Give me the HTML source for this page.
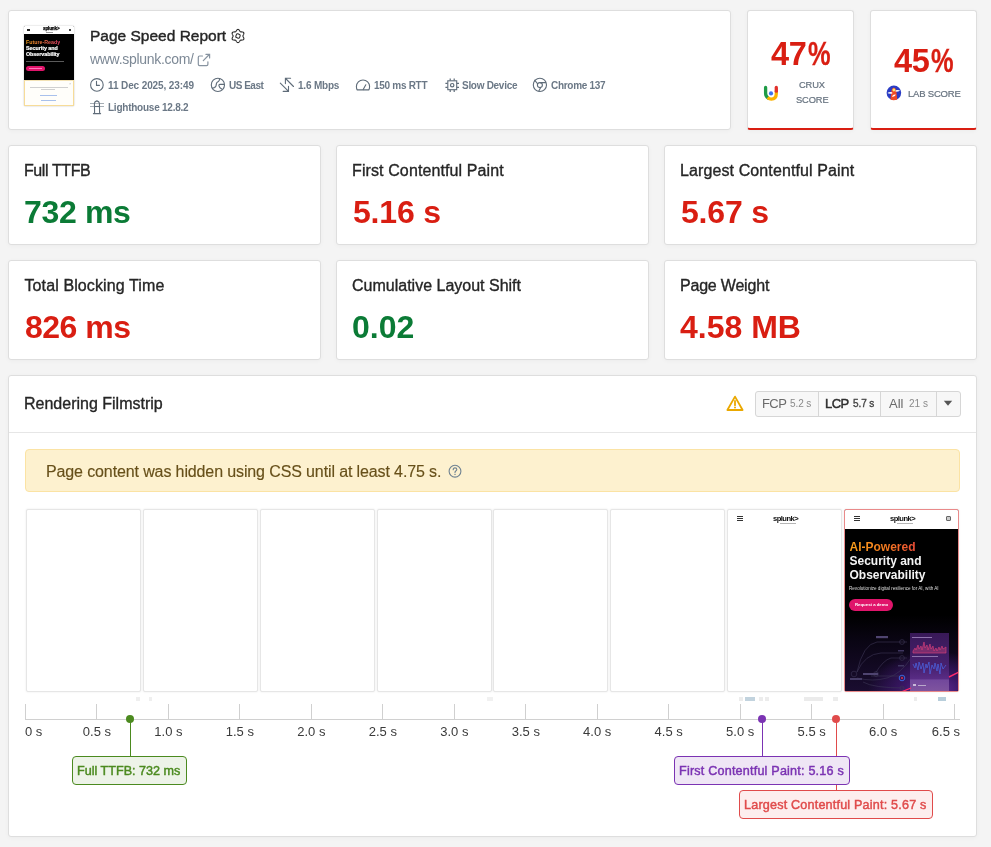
<!DOCTYPE html>
<html><head><meta charset="utf-8">
<style>
*{box-sizing:border-box;margin:0;padding:0}
html,body{width:991px;height:847px;overflow:hidden;background:#f4f4f4;font-family:"Liberation Sans",sans-serif;}
body{position:relative;will-change:transform}
.card{position:absolute;background:#fff;border:1px solid #dedede;border-radius:3px;box-shadow:0 1px 4px rgba(0,0,0,.035)}
.t{position:absolute;white-space:nowrap;line-height:1}
svg{position:absolute;overflow:visible}
.meta{font-size:10px;font-weight:bold;color:#6b7886}
.mt{font-size:16px;color:#262626;-webkit-text-stroke:.35px #262626}
.mv{font-size:32px;font-weight:bold}
.red{color:#d91e12}
.green{color:#0b7b36}
.frame{position:absolute;top:509px;width:115px;height:183px;background:#fff;border:1px solid #e6e6e6;border-radius:2px;box-shadow:0 0 2px rgba(0,0,0,.1)}
.tick{position:absolute;top:704px;width:1px;height:15px;background:#d0d0d0}
.al{position:absolute;top:725px;font-size:13px;color:#3a3a3a;line-height:1;white-space:nowrap}
</style></head><body>

<!-- Header card -->
<div class="card" style="left:8px;top:10px;width:723px;height:120px"></div>
<div class="card" style="left:747px;top:10px;width:107px;height:120px;border-bottom:2px solid #d91e12"></div>
<div class="card" style="left:870px;top:10px;width:107px;height:120px;border-bottom:2px solid #d91e12"></div>
<!-- thumbnail -->
<div id="thumb" style="position:absolute;left:24px;top:26px;width:50px;height:80px;background:#000;box-shadow:0 0 1.5px rgba(0,0,0,.35);overflow:hidden;border-radius:1px">
  <div style="position:absolute;left:0;top:0;width:50px;height:8px;background:#fff"></div>
  <div style="position:absolute;left:3px;top:3px;width:2.5px;height:2px;background:#222"></div>
  <div class="t" style="left:19px;top:1.2px;font-size:4.6px;font-weight:bold;color:#000;-webkit-text-stroke:.25px #000;letter-spacing:-.15px">splunk&gt;</div><div style="position:absolute;left:22px;top:6px;width:7px;height:.6px;background:#999"></div>
  <div style="position:absolute;left:45px;top:3px;width:2px;height:2px;background:#444"></div>
  <div class="t" style="left:2px;top:13.5px;font-size:5.3px;font-weight:bold;background:linear-gradient(90deg,#f7a21b,#ee3f6b);-webkit-background-clip:text;color:transparent">Future-Ready</div>
  <div class="t" style="left:2px;top:19.8px;font-size:5.3px;font-weight:bold;color:#fff;-webkit-text-stroke:.2px #fff">Security and</div>
  <div class="t" style="left:2px;top:26px;font-size:5.3px;font-weight:bold;color:#fff;-webkit-text-stroke:.2px #fff">Observability</div>
  <div style="position:absolute;left:2px;top:34.5px;width:38px;height:.8px;background:#5a5a5a"></div>
  <div style="position:absolute;left:2px;top:39.5px;width:19px;height:5px;border-radius:3px;background:#e0156b"></div>
  <div style="position:absolute;left:5px;top:41.5px;width:13px;height:1px;background:#f7b"></div>
  <div style="position:absolute;left:0;top:54px;width:50px;height:26px;background:#fffefa;border:1px solid #f7dc98;border-top:1px solid #f3e2b5"></div>
  <div style="position:absolute;left:6px;top:60.5px;width:38px;height:1px;background:#d0d0d0"></div>
  <div style="position:absolute;left:17px;top:63px;width:14px;height:1px;background:#d0d0d0"></div>
  <div style="position:absolute;left:16px;top:69px;width:17px;height:1px;background:#a9c1ec"></div>
  <div class="t" style="left:45px;top:56px;font-size:4px;color:#bbb">&#215;</div>
  <div style="position:absolute;left:17px;top:74px;width:15px;height:1px;background:#a9c1ec"></div>
</div>

<div class="t" style="left:90px;top:28px;font-size:15.5px;color:#262626;-webkit-text-stroke:.4px #262626">Page Speed Report</div>
<div class="t" style="left:90px;top:52px;font-size:14px;color:#7d8996;letter-spacing:-.3px">www.splunk.com/</div>

<div class="t meta" style="left:108px;top:81px;letter-spacing:-.11px">11 Dec 2025, 23:49</div>
<div class="t meta" style="left:229px;top:81px;letter-spacing:-.5px">US East</div>
<div class="t meta" style="left:298px;top:81px;letter-spacing:-.2px">1.6 Mbps</div>
<div class="t meta" style="left:374px;top:81px;letter-spacing:-.29px">150 ms RTT</div>
<div class="t meta" style="left:462px;top:81px;letter-spacing:-.29px">Slow Device</div>
<div class="t meta" style="left:551px;top:81px;letter-spacing:-.3px">Chrome 137</div>
<div class="t meta" style="left:108px;top:102.5px;letter-spacing:-.24px">Lighthouse 12.8.2</div>


<!-- header icons -->
<svg style="left:231px;top:29px" width="14" height="14" viewBox="0 0 14 14"><path d="M11.90 7.00 L11.93 6.74 L12.03 6.47 L12.19 6.18 L12.37 5.86 L12.55 5.51 L12.72 5.14 L12.83 4.76 L12.88 4.38 L12.84 4.02 L12.72 3.70 L12.50 3.43 L12.21 3.22 L11.86 3.07 L11.47 2.98 L11.07 2.93 L10.67 2.92 L10.30 2.92 L9.98 2.90 L9.69 2.86 L9.45 2.76 L9.24 2.60 L9.06 2.38 L8.88 2.10 L8.70 1.78 L8.49 1.45 L8.25 1.12 L7.98 0.83 L7.67 0.60 L7.34 0.45 L7.00 0.40 L6.66 0.45 L6.33 0.60 L6.02 0.83 L5.75 1.12 L5.51 1.45 L5.30 1.78 L5.12 2.10 L4.94 2.38 L4.76 2.60 L4.55 2.76 L4.31 2.86 L4.02 2.90 L3.70 2.92 L3.33 2.92 L2.93 2.93 L2.53 2.98 L2.14 3.07 L1.79 3.22 L1.50 3.43 L1.28 3.70 L1.16 4.02 L1.12 4.38 L1.17 4.76 L1.28 5.14 L1.45 5.51 L1.63 5.86 L1.81 6.18 L1.97 6.47 L2.07 6.74 L2.10 7.00 L2.07 7.26 L1.97 7.53 L1.81 7.82 L1.63 8.14 L1.45 8.49 L1.28 8.86 L1.17 9.24 L1.12 9.62 L1.16 9.98 L1.28 10.30 L1.50 10.57 L1.79 10.78 L2.14 10.93 L2.53 11.02 L2.93 11.07 L3.33 11.08 L3.70 11.08 L4.02 11.10 L4.31 11.14 L4.55 11.24 L4.76 11.40 L4.94 11.62 L5.12 11.90 L5.30 12.22 L5.51 12.55 L5.75 12.88 L6.02 13.17 L6.33 13.40 L6.66 13.55 L7.00 13.60 L7.34 13.55 L7.67 13.40 L7.98 13.17 L8.25 12.88 L8.49 12.55 L8.70 12.22 L8.88 11.90 L9.06 11.62 L9.24 11.40 L9.45 11.24 L9.69 11.14 L9.98 11.10 L10.30 11.08 L10.67 11.08 L11.07 11.07 L11.47 11.02 L11.86 10.93 L12.21 10.78 L12.50 10.57 L12.72 10.30 L12.84 9.98 L12.88 9.62 L12.83 9.24 L12.72 8.86 L12.55 8.49 L12.37 8.14 L12.19 7.82 L12.03 7.53 L11.93 7.26Z" fill="none" stroke="#2d2d2d" stroke-width="1.1" stroke-linejoin="round"/><rect x="5" y="5" width="4" height="4" rx="1.2" transform="rotate(20 7 7)" fill="none" stroke="#2d2d2d" stroke-width="1.1"/></svg>
<svg style="left:197px;top:53px" width="14" height="14" viewBox="0 0 14 14"><path d="M5.5 3 H2.6 Q1.3 3 1.3 4.3 V11.3 Q1.3 12.6 2.6 12.6 H9.6 Q10.9 12.6 10.9 11.3 V8.8" fill="none" stroke="#8793a0" stroke-width="1.2" stroke-linecap="round"/><path d="M6.3 7.6 L12.3 1.5 M8.9 1.3 H12.6 V5" fill="none" stroke="#8793a0" stroke-width="1.2" stroke-linecap="round"/></svg>

<svg style="left:89px;top:78px" width="16" height="15" viewBox="0 0 16 15"><circle cx="7.9" cy="6.9" r="6.3" fill="none" stroke="#5f6c79" stroke-width="1.1"/><path d="M7.5 3.3 V7.4 H10.4" fill="none" stroke="#5f6c79" stroke-width="1.1" stroke-linecap="round" stroke-linejoin="round"/></svg>
<svg style="left:210px;top:77px" width="16" height="16" viewBox="0 0 16 16"><circle cx="7.9" cy="7.9" r="6.6" fill="none" stroke="#5f6c79" stroke-width="1.1"/><path d="M9.6 1.6 Q9.6 3.6 8.4 4.6 Q6.6 5.2 6.4 6.6 Q6.4 9.8 4.4 10.6 L2.2 11.2" fill="none" stroke="#5f6c79" stroke-width="1.1" stroke-linejoin="round"/><path d="M14.4 7.4 H9.8 Q8.9 7.4 8.9 8.6 Q9.2 10.6 12 12.3" fill="none" stroke="#5f6c79" stroke-width="1.1" stroke-linejoin="round"/></svg>
<svg style="left:279px;top:77px" width="16" height="16" viewBox="0 0 16 16"><path d="M6.4 6.6 V1.3 H11.6 M6.6 1.5 L14.5 9.5" fill="none" stroke="#5f6c79" stroke-width="1.1" stroke-linecap="round" stroke-linejoin="miter"/><path d="M4.2 14.4 H9.5 V9.2 M9.3 14.2 L1.3 6.2" fill="none" stroke="#5f6c79" stroke-width="1.1" stroke-linecap="round" stroke-linejoin="miter"/></svg>
<svg style="left:355px;top:78px" width="16" height="14" viewBox="0 0 16 14"><path d="M2.2 11.9 Q1.4 10.7 1.4 8.6 A6.6 6.6 0 0 1 14.6 8.6 Q14.6 10.7 13.8 11.9 Z" fill="none" stroke="#5f6c79" stroke-width="1.1" stroke-linejoin="round"/><path d="M8.2 11.6 L10.8 6.8" fill="none" stroke="#5f6c79" stroke-width="1.1" stroke-linecap="round"/></svg>
<svg style="left:444px;top:77px" width="16" height="16" viewBox="0 0 16 16"><rect x="3.8" y="3.8" width="8.9" height="8.9" fill="none" stroke="#5f6c79" stroke-width="1.1"/><path d="M6.2 1.4 V3.6 M10.2 1.4 V3.6 M6.2 12.9 V15 M10.2 12.9 V15 M1.4 6.3 H3.6 M1.4 10.3 H3.6 M12.9 6.3 H15 M12.9 10.3 H15" stroke="#5f6c79" stroke-width="1.2"/><circle cx="8.2" cy="8.2" r="1.7" fill="none" stroke="#5f6c79" stroke-width="1.2"/></svg>
<svg style="left:532px;top:77px" width="16" height="16" viewBox="0 0 16 16"><circle cx="7.9" cy="7.9" r="6.6" fill="none" stroke="#5f6c79" stroke-width="1.1"/><circle cx="7.9" cy="8.1" r="2.5" fill="none" stroke="#5f6c79" stroke-width="1.1"/><path d="M7.9 5.6 H14 M5.7 7 L2.5 2.9 M8.7 10.5 L6.6 14.4" fill="none" stroke="#5f6c79" stroke-width="1.1"/></svg>
<svg style="left:89px;top:100px" width="16" height="15" viewBox="0 0 16 15"><path d="M5.6 12.6 L5.4 3.2 Q5.6 1.6 7.9 0.9 Q10.2 1.6 10.4 3.2 L10.6 12.6 Q10.8 13.6 11.6 13.6 H4.4 Q5.2 13.6 5.6 12.6 Z" fill="none" stroke="#5f6c79" stroke-width="1.1" stroke-linejoin="round"/><path d="M5.5 6.5 H10.5" stroke="#5f6c79" stroke-width="1.1"/><path d="M1 3.5 H5 M11 3.5 H15 M1 6.5 H5 M11 6.5 H15" stroke="#5f6c79" stroke-width="1" opacity=".55"/><path d="M5.4 3.5 H10.6" stroke="#5f6c79" stroke-width="1" opacity=".45"/></svg>

<!-- score icons -->
<svg style="left:763px;top:85px" width="16" height="16" viewBox="0 0 16 16"><path d="M2.6 2.4 V8.2 Q2.6 11.4 5.2 13.1" fill="none" stroke="#1f9b46" stroke-width="3.3" stroke-linecap="round"/><path d="M4.6 12.6 Q6.5 14.2 8.2 14.2 Q13.3 14 13.3 8.6 V5.4" fill="none" stroke="#fbb300" stroke-width="3.3"/><path d="M13.3 6.2 V2.5" fill="none" stroke="#e2312b" stroke-width="3.3" stroke-linecap="round"/><circle cx="8" cy="8.4" r="2.1" fill="#3b71ee"/></svg>
<svg style="left:886px;top:85px" width="16" height="16" viewBox="0 0 16 16"><circle cx="7.9" cy="7.8" r="7.3" fill="#2a3cc4"/><path d="M4.4 14.6 L5.4 6 Q5.6 3.6 7.9 2.6 Q10.2 3.6 10.4 6 L11.2 14.4 Q8 15.8 4.4 14.6 Z" fill="#ef4a26"/><circle cx="7.9" cy="5" r="1.4" fill="#f4ec78"/><path d="M1.4 8 Q3 6.8 6.2 7.2 L6.3 8.6 Q3 9.2 1.4 8 Z M14.2 5.6 Q12.6 4.6 9.6 5.2 L9.6 6.8 Q12.6 6.8 14.2 5.6 Z" fill="#fff"/><path d="M6.2 11 Q8 9.2 9.8 9.6 Q9.6 11.4 6.4 12 Z" fill="#fff"/></svg>

<!-- score cards -->
<div class="t red" style="left:771px;top:37.5px;font-size:32.5px;font-weight:bold;letter-spacing:-.4px">47<span style="display:inline-block;transform:scaleX(.78);transform-origin:0 0;margin-left:1.5px;-webkit-text-stroke:.3px #d91e12">%</span></div>
<div class="t" style="left:799px;top:81px;font-size:9.3px;color:#66727f;-webkit-text-stroke:.2px #66727f;letter-spacing:-.1px">CRUX</div>
<div class="t" style="left:796px;top:95.5px;font-size:9.3px;color:#66727f;-webkit-text-stroke:.2px #66727f;letter-spacing:-.1px">SCORE</div>
<div class="t red" style="left:894px;top:44.5px;font-size:32.5px;font-weight:bold;letter-spacing:-.4px">45<span style="display:inline-block;transform:scaleX(.78);transform-origin:0 0;margin-left:1.5px;-webkit-text-stroke:.3px #d91e12">%</span></div>
<div class="t" style="left:908px;top:89px;font-size:9.5px;color:#66727f;-webkit-text-stroke:.2px #66727f;letter-spacing:-.2px">LAB SCORE</div>

<!-- metric cards -->
<div class="card" style="left:8px;top:145px;width:313px;height:100px"></div>
<div class="card" style="left:336px;top:145px;width:313px;height:100px"></div>
<div class="card" style="left:664px;top:145px;width:313px;height:100px"></div>
<div class="card" style="left:8px;top:260px;width:313px;height:100px"></div>
<div class="card" style="left:336px;top:260px;width:313px;height:100px"></div>
<div class="card" style="left:664px;top:260px;width:313px;height:100px"></div>

<div class="t mt" style="left:24px;top:163px;letter-spacing:-.4px">Full TTFB</div>
<div class="t mv green" style="left:24px;top:196px;letter-spacing:-.35px">732 ms</div>
<div class="t mt" style="left:352px;top:163px;letter-spacing:.11px">First Contentful Paint</div>
<div class="t mv red" style="left:353px;top:196px;letter-spacing:-.2px">5.16 s</div>
<div class="t mt" style="left:680px;top:163px;letter-spacing:.11px">Largest Contentful Paint</div>
<div class="t mv red" style="left:681px;top:196px;letter-spacing:-.2px">5.67 s</div>
<div class="t mt" style="left:24.5px;top:278px;letter-spacing:.11px">Total Blocking Time</div>
<div class="t mv red" style="left:25px;top:311px;letter-spacing:-.5px">826 ms</div>
<div class="t mt" style="left:352px;top:278px">Cumulative Layout Shift</div>
<div class="t mv green" style="left:352px;top:311px">0.02</div>
<div class="t mt" style="left:680px;top:278px;letter-spacing:-.2px">Page Weight</div>
<div class="t mv red" style="left:680px;top:311px">4.58 MB</div>

<!-- filmstrip card -->
<div class="card" style="left:8px;top:375px;width:969px;height:462px"></div>
<div style="position:absolute;left:9px;top:432px;width:967px;height:1px;background:#e6e6e6"></div>
<div class="t mt" style="left:24px;top:396px">Rendering Filmstrip</div>

<div style="position:absolute;left:25px;top:449px;width:935px;height:43px;background:#fdf1cf;border:1px solid #fbe3a4;border-radius:4px"></div>
<div class="t" style="left:46px;top:463.5px;font-size:16px;color:#67501a;-webkit-text-stroke:.15px #67501a;letter-spacing:-.12px">Page content was hidden using CSS until at least 4.75 s.</div>

<!-- frames -->
<div class="frame" style="left:26px"></div>
<div class="frame" style="left:142.86px"></div>
<div class="frame" style="left:259.71px"></div>
<div class="frame" style="left:376.57px"></div>
<div class="frame" style="left:493.43px"></div>
<div class="frame" style="left:610.29px"></div>
<div class="frame" style="left:727.14px"></div>
<div class="frame" style="left:844px;border-color:#e98a8a"></div>


<!-- frame 7 content -->
<div style="position:absolute;left:737px;top:516px;width:6px;height:1.2px;background:#333;box-shadow:0 2px 0 #333,0 4px 0 #333"></div>
<div class="t" style="left:773px;top:514.8px;font-size:7.6px;font-weight:bold;color:#111;letter-spacing:-.55px">splunk&gt;</div>
<div style="position:absolute;left:780px;top:522.5px;width:16px;height:1px;background:#b5b5b5"></div>

<!-- LCP frame content -->
<div style="position:absolute;left:845px;top:510px;width:113px;height:181px;overflow:hidden;background:#000;border-radius:1px">
  <div style="position:absolute;left:0;top:0;width:113px;height:18.5px;background:#fff"></div>
  <div style="position:absolute;left:9px;top:6px;width:6px;height:1.2px;background:#333;box-shadow:0 2px 0 #333,0 4px 0 #333"></div>
  <div class="t" style="left:45px;top:4.8px;font-size:7.6px;font-weight:bold;color:#111;letter-spacing:-.55px">splunk&gt;</div>
  <div style="position:absolute;left:52px;top:12.5px;width:16px;height:1px;background:#b5b5b5"></div>
  <div style="position:absolute;left:101px;top:6px;width:5px;height:5px;border:1px solid #666;border-radius:1px;background:#ccc"></div>
  <div style="position:absolute;left:0;top:105px;width:113px;height:76px;background:radial-gradient(ellipse 65px 40px at 88px 76px,#6a2fa0 0%,#3a1766 45%,rgba(20,8,40,0) 100%),linear-gradient(180deg,#000 0%,#0a0514 35%,#1a0d30 100%)"></div>
  <div class="t" style="left:4.5px;top:31px;font-size:12px;font-weight:bold;background:linear-gradient(90deg,#f9a01b,#f47a20 55%,#ee4d38);-webkit-background-clip:text;color:transparent">AI-Powered</div>
  <div class="t" style="left:4.5px;top:45px;font-size:12px;font-weight:bold;color:#f4f4f4">Security and</div>
  <div class="t" style="left:4.5px;top:58.5px;font-size:12px;font-weight:bold;color:#f4f4f4">Observability</div>
  <div class="t" style="left:4px;top:76.5px;font-size:4.6px;color:#ddd">Revolutionize digital resilience for AI, with AI</div>
  <div style="position:absolute;left:3.8px;top:89px;width:44.5px;height:12px;border-radius:6px;background:#e0156b"></div>
  <div class="t" style="left:10px;top:93px;font-size:4.3px;font-weight:bold;color:#fff">Request a demo</div>
  <!-- network diagram -->
  <svg style="left:0;top:118px" width="70" height="62" viewBox="0 0 70 62"><g fill="none" stroke="#3d3556" stroke-width=".6">
    <path d="M12 44 Q18 16 32 14 H62"/><path d="M12 44 Q20 26 36 25 H58"/><path d="M12 50 Q28 54 42 50 Q56 46 66 30"/><path d="M30 46 Q38 32 46 30 H62"/><path d="M26 48 H60"/><path d="M18 54 Q28 60 60 60"/>
    <circle cx="9" cy="46" r="2.8"/><circle cx="31" cy="46" r="2.4"/><circle cx="57" cy="14" r="2.4"/><circle cx="57" cy="30" r="2.4"/><circle cx="57" cy="60" r="2"/></g>
    <rect x="31" y="8" width="12" height="2.2" fill="#4f4470"/><rect x="18" y="45" width="15" height="2" fill="#4f4470"/><rect x="5" y="50" width="12" height="2" fill="#463c66"/><rect x="53" y="22" width="6" height="1.5" fill="#3f3660"/><rect x="53" y="37" width="6" height="1.5" fill="#3f3660"/>
    <circle cx="57" cy="50" r="2.8" fill="none" stroke="#3a62d8" stroke-width="1"/><circle cx="57" cy="50" r="1.1" fill="#d83048"/>
  </svg>
  <!-- panel -->
  <div style="position:absolute;left:65px;top:123px;width:39px;height:58px;background:linear-gradient(180deg,#3b1a5c 0%,#4a2272 60%,#5a2d86 79%,#744a9e 81%,#80569f 100%);opacity:.95"></div>
  <div style="position:absolute;left:67px;top:127px;width:20px;height:1px;background:#8f72ad"></div>
  <svg style="left:68px;top:131px" width="34" height="12" viewBox="0 0 34 12"><path d="M0 10 L2 7 L3 9 L5 4 L6 8 L8 5 L9 9 L11 1 L12 7 L14 4 L15 9 L17 3 L18 8 L20 5 L21 10 L23 7 L24 10 L26 6 L27 9 L29 5 L30 8 L33 6 V12 H0Z" fill="#7a2d6e" stroke="#e0407a" stroke-width=".6"/></svg>
  <div style="position:absolute;left:67px;top:146px;width:26px;height:1px;background:#8f72ad"></div>
  <svg style="left:68px;top:149px" width="34" height="17" viewBox="0 0 34 17"><path d="M0 5 L2 9 L3 4 L5 11 L6 3 L8 10 L10 4 L11 14 L13 5 L14 9 L16 3 L17 15 L19 6 L21 10 L22 4 L24 12 L25 5 L27 15 L28 4 L30 10 L33 6" fill="none" stroke="#4a67e6" stroke-width=".7"/></svg>
  <div style="position:absolute;left:68px;top:174px;width:3px;height:2px;background:#c9b9d9"></div>
  <div style="position:absolute;left:73px;top:174.5px;width:8px;height:1px;background:#b9a9cb"></div>
  <svg style="left:0;top:0" width="113" height="181" viewBox="0 0 113 181"><path d="M56 182 L66 178" stroke="#ff2a6d" stroke-width="1.2"/><path d="M104 167 L114 162" stroke="#ff2a6d" stroke-width="1.4"/></svg>
</div>

<!-- tiny bars -->
<div style="position:absolute;top:697px;height:4px;left:136px;width:4px;background:#efefef"></div>
<div style="position:absolute;top:697px;height:4px;left:149px;width:3px;background:#efefef"></div>
<div style="position:absolute;top:697px;height:4px;left:487px;width:6px;background:#f1f1f1"></div>
<div style="position:absolute;top:697px;height:4px;left:739px;width:4px;background:#ececec"></div>
<div style="position:absolute;top:697px;height:4px;left:745px;width:10px;background:#c2d3de"></div>
<div style="position:absolute;top:697px;height:4px;left:759px;width:4px;background:#ececec"></div>
<div style="position:absolute;top:697px;height:4px;left:765px;width:4px;background:#ececec"></div>
<div style="position:absolute;top:697px;height:4px;left:804px;width:19px;background:#ebebeb"></div>
<div style="position:absolute;top:697px;height:4px;left:833px;width:5px;background:#ececec"></div>
<div style="position:absolute;top:697px;height:4px;left:914px;width:3px;background:#ececec"></div>
<div style="position:absolute;top:697px;height:4px;left:938px;width:8px;background:#b8cedb"></div>

<!-- axis -->
<div style="position:absolute;left:25px;top:719px;width:935px;height:1px;background:#d0d0d0"></div>

<div class="tick" style="left:24.9px"></div>
<div class="tick" style="left:96.4px"></div>
<div class="tick" style="left:167.9px"></div>
<div class="tick" style="left:239.3px"></div>
<div class="tick" style="left:310.8px"></div>
<div class="tick" style="left:382.3px"></div>
<div class="tick" style="left:453.8px"></div>
<div class="tick" style="left:525.3px"></div>
<div class="tick" style="left:596.7px"></div>
<div class="tick" style="left:668.2px"></div>
<div class="tick" style="left:739.7px"></div>
<div class="tick" style="left:811.2px"></div>
<div class="tick" style="left:882.7px"></div>
<div class="tick" style="left:954.1px"></div>
<div class="al" style="left:25px">0 s</div>
<div class="al" style="left:96.9px;transform:translateX(-50%)">0.5 s</div>
<div class="al" style="left:168.4px;transform:translateX(-50%)">1.0 s</div>
<div class="al" style="left:239.8px;transform:translateX(-50%)">1.5 s</div>
<div class="al" style="left:311.3px;transform:translateX(-50%)">2.0 s</div>
<div class="al" style="left:382.8px;transform:translateX(-50%)">2.5 s</div>
<div class="al" style="left:454.3px;transform:translateX(-50%)">3.0 s</div>
<div class="al" style="left:525.8px;transform:translateX(-50%)">3.5 s</div>
<div class="al" style="left:597.2px;transform:translateX(-50%)">4.0 s</div>
<div class="al" style="left:668.7px;transform:translateX(-50%)">4.5 s</div>
<div class="al" style="left:740.2px;transform:translateX(-50%)">5.0 s</div>
<div class="al" style="left:811.7px;transform:translateX(-50%)">5.5 s</div>
<div class="al" style="left:883.2px;transform:translateX(-50%)">6.0 s</div>
<div class="al" style="right:31px">6.5 s</div>

<!-- markers -->
<div style="position:absolute;left:129.5px;top:719px;width:1px;height:38px;background:#4b8a1f"></div>
<div style="position:absolute;left:126px;top:715px;width:8px;height:8px;border-radius:50%;background:#4b8a1f"></div>
<div class="t" style="left:72px;top:756px;width:115px;height:28.5px;border:1px solid #4b8a1f;background:#edf3e8;border-radius:4px;"></div>
<div class="t" style="left:77px;top:764.5px;font-size:12.6px;color:#4b8a1f;-webkit-text-stroke:.45px #4b8a1f">Full TTFB: 732 ms</div>

<div style="position:absolute;left:762px;top:719px;width:1px;height:38px;background:#7b33b3"></div>
<div style="position:absolute;left:836px;top:719px;width:1px;height:72px;background:#e04b4b"></div>
<div style="position:absolute;left:758px;top:715px;width:8px;height:8px;border-radius:50%;background:#7b33b3"></div>
<div style="position:absolute;left:832px;top:715px;width:8px;height:8px;border-radius:50%;background:#e04b4b"></div>
<div class="t" style="left:674px;top:756px;width:176px;height:28.5px;border:1px solid #7b33b3;background:#efe6f5;border-radius:4px;"></div>
<div class="t" style="left:679px;top:764.5px;font-size:12.6px;color:#7b33b3;-webkit-text-stroke:.45px #7b33b3;letter-spacing:.2px">First Contentful Paint: 5.16 s</div>
<div class="t" style="left:739px;top:790px;width:194px;height:28.5px;border:1px solid #e04b4b;background:#fdeeee;border-radius:4px;"></div>
<div class="t" style="left:744px;top:798.5px;font-size:12.6px;color:#e04b4b;-webkit-text-stroke:.45px #e04b4b;letter-spacing:.19px">Largest Contentful Paint: 5.67 s</div>

<!-- controls -->
<svg style="left:726px;top:395px" width="18" height="17" viewBox="0 0 18 17"><path d="M9 1.6 L16.6 15 H1.4 Z" fill="none" stroke="#eaa800" stroke-width="1.8" stroke-linejoin="round"/><path d="M9 6 V10.2" stroke="#eaa800" stroke-width="1.8" stroke-linecap="round"/><circle cx="9" cy="12.6" r="1" fill="#eaa800"/></svg>
<div style="position:absolute;left:755px;top:391px;width:206px;height:26px;border:1px solid #d6d6d6;border-radius:3px;background:#f7f7f7;overflow:hidden">
  <div style="position:absolute;left:62px;top:0;width:1px;height:24px;background:#d6d6d6"></div>
  <div style="position:absolute;left:63px;top:0;width:61px;height:24px;background:#f9f9f9"></div>
  <div style="position:absolute;left:124px;top:0;width:1px;height:24px;background:#d6d6d6"></div>
  <div style="position:absolute;left:180px;top:0;width:1px;height:24px;background:#d6d6d6"></div>
</div>
<div class="t" style="left:762px;top:397px;font-size:13px;color:#6a6a6a;letter-spacing:-.6px">FCP</div>
<div class="t" style="left:790px;top:399px;font-size:10px;color:#8a8a8a;letter-spacing:-.1px">5.2 s</div>
<div class="t" style="left:825px;top:397px;font-size:13px;color:#2e2e2e;-webkit-text-stroke:.45px #2e2e2e;letter-spacing:-.5px">LCP</div>
<div class="t" style="left:853px;top:399px;font-size:10px;color:#444;-webkit-text-stroke:.35px #444;letter-spacing:-.1px">5.7 s</div>
<div class="t" style="left:889px;top:397px;font-size:13px;color:#6a6a6a;">All</div>
<div class="t" style="left:909px;top:399px;font-size:10px;color:#8a8a8a;">21 s</div>
<svg style="left:943px;top:400px" width="10" height="7" viewBox="0 0 10 7"><path d="M.8 .8 H9.2 L5 5.8 Z" fill="#555"/></svg>
<svg style="left:448px;top:464px" width="15" height="15" viewBox="0 0 15 15"><circle cx="7" cy="7.2" r="5.9" fill="none" stroke="#6f8291" stroke-width="1.1"/><path d="M5.2 5.7 Q5.2 3.9 7 3.9 Q8.8 3.9 8.8 5.5 Q8.8 6.4 7.8 7 Q7 7.5 7 8.6" fill="none" stroke="#6f8291" stroke-width="1.1" stroke-linecap="round"/><circle cx="7" cy="10.4" r=".7" fill="#6f8291"/></svg>

</body></html>
